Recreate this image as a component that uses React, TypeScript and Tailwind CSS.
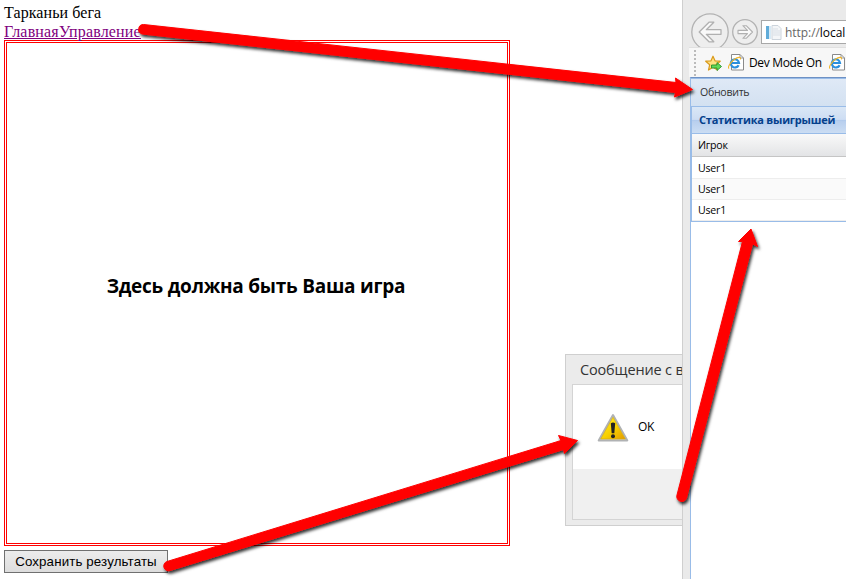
import React from "react";

function GamePane() {
  return (
    <main className="w-[682px] h-full shrink-0 bg-white pl-1 pt-[3px] overflow-hidden">
      <div className="font-['Liberation_Serif',serif] text-[16px] leading-[19px] text-black">
        <div className="h-[19px] tracking-[0.08px]">Тарканьи бега</div>
        <div className="h-[18px] leading-[19px] text-[#800080] underline whitespace-nowrap tracking-[0.17px]">
          <a>Главная</a><a>Управление</a>
        </div>
      </div>
      <section className="w-[506px] h-[506px] border-[3px] border-double border-[#ff0000] flex items-center justify-center pb-[14px]">
        <h1 className="font-['Open_Sans','Noto_Sans',sans-serif] font-bold text-[19px] leading-[26px] text-black whitespace-nowrap tracking-[-0.24px] -ml-[2px]">Здесь должна быть Ваша игра</h1>
      </section>
      <button className="mt-1 block w-[164px] h-[23px] border border-[#707070] bg-linear-to-b from-[#ececec] to-[#dddddd] font-['Liberation_Sans',sans-serif] text-[13.33px] leading-[20px] tracking-[0.12px] text-black whitespace-nowrap">Сохранить результаты</button>
    </main>
  );
}

function WarningIcon() {
  return (
    <svg width="32" height="30" viewBox="0 0 32 30">
      <defs>
        <linearGradient id="warn" x1="0" y1="0" x2="1" y2="1">
          <stop offset="0.2" stopColor="#ffe51a" />
          <stop offset="0.55" stopColor="#f7cf00" />
          <stop offset="1" stopColor="#e39a00" />
        </linearGradient>
      </defs>
      <path d="M16 2 30.3 27.4H1.7Z" fill="#d8dadb" stroke="#b0b2b4" strokeWidth="2" strokeLinejoin="round" />
      <path d="M16 4.2 28.3 26H3.7Z" fill="url(#warn)" stroke="#d6ae12" strokeWidth=".7" />
      <path d="M13.8 10.2q2.2-1.2 4.4 0l-.9 10h-2.6Z" fill="#222" />
      <circle cx="16" cy="23.3" r="2" fill="#222" />
    </svg>
  );
}

function MessageDialog() {
  return (
    <div className="absolute left-[565px] top-[354px] w-[160px] h-[172px] border border-[#cfcfcf] bg-[#ebebeb] pl-[6px]">
      <div className="h-[29px] pl-2 pt-[4px] font-['Open_Sans','Noto_Sans',sans-serif] text-[14.5px] leading-[21px] tracking-[-0.16px] text-[#333] whitespace-nowrap">Сообщение с веб-страницы</div>
      <div className="h-[136px] border border-[#d4d4d4] bg-[#f0f0f0]">
        <div className="h-[84px] bg-white flex items-center pl-[24px] gap-[9px] pt-[2px]">
          <WarningIcon />
          <span className="font-['Open_Sans','Noto_Sans',sans-serif] text-[12px] leading-4 text-black pb-[2px] tracking-[-0.4px]">OK</span>
        </div>
      </div>
    </div>
  );
}

function IeIcon() {
  return (
    <svg width="17" height="17" viewBox="0 0 17 17" className="shrink-0">
      <path d="M3.5.5h8.5l3.5 3.5v12h-12Z" fill="#fff" stroke="#8a8a8a" />
      <path d="M12 .5v3.5h3.5" fill="none" stroke="#999" />
      <path d="M10.6 11.2A4.1 4.1 0 1 1 11 9H3.6" fill="none" stroke="#2a8fdd" strokeWidth="2.2" />
      <path d="M1 14.6C-1 12.6 5 4.2 11 3.4c1.5-.2 1.8.8 1.1 2" fill="none" stroke="#f0b52b" strokeWidth="1.1" />
    </svg>
  );
}

function BackIcon() {
  return (
    <svg width="38" height="38" viewBox="0 0 38 38" className="shrink-0">
      <circle cx="19" cy="19" r="18.2" fill="#eeeeee" stroke="#b2b2b2" strokeWidth="1.3" />
      <path d="M8.2 19 18 9.2h4.8L15.3 16.7H30v4.6H15.3l7.5 7.5H18Z" fill="#f9f9f9" stroke="#b0b0b0" strokeWidth="1.3" strokeLinejoin="round" />
    </svg>
  );
}

function ForwardIcon() {
  return (
    <svg width="26" height="26" viewBox="0 0 26 26" className="shrink-0">
      <circle cx="13" cy="13" r="12.3" fill="#eeeeee" stroke="#b2b2b2" strokeWidth="1.3" />
      <path d="m20.5 13-6.3 6.3h-3.3l4.6-4.7H6v-3.2h9.5l-4.6-4.7h3.3Z" fill="#f9f9f9" stroke="#b0b0b0" strokeWidth="1.1" strokeLinejoin="round" />
    </svg>
  );
}

function FavoriteIcon() {
  return (
    <svg width="18" height="17" viewBox="0 0 18 17" className="shrink-0">
      <path d="m8 1.2 2 4.6 5.2.4-4 3.5 1.3 5.3L8 12.3 3.5 15l1.2-5.3-4-3.5L6 5.8Z" fill="#ffe182" stroke="#d99a1c" strokeWidth="1.2" strokeLinejoin="round" />
      <path d="M6.5 10H12V7.5l4.5 4-4.5 4V13H6.5Z" fill="#62d957" stroke="#29912d" strokeWidth=".9" />
    </svg>
  );
}

function BrowserPane() {
  return (
    <aside className="relative w-[164px] h-full border-l border-[#cfcfcf] bg-[#eaeaea] pl-[6px] overflow-hidden font-['Open_Sans','Noto_Sans',sans-serif]">
      <header className="h-[47px] pl-[2px] pt-[13px] flex items-start overflow-hidden">
        <BackIcon />
        <span className="mt-[6px] ml-[3px] flex shrink-0"><ForwardIcon /></span>
        <div className="ml-[3px] mt-[7px] w-[100px] h-[24px] shrink-0 border border-[#a8a8a8] bg-white flex items-center whitespace-nowrap text-[12px] leading-[17px] text-[#666]">
          <svg width="18" height="17" viewBox="0 0 18 17" className="ml-[3px] mr-[2px] shrink-0">
            <path d="M7 1.5h6l3 3v11H7Z" fill="#f4f6f8" stroke="#ccd4dc" />
            <path d="M8 5h5M8 7h7M8 9h7M8 11h7" stroke="#d9dfe6" />
            <path d="M1 2h5v13H1Z" fill="#d7eaf6" />
            <path d="M1 2h3v13H1Z" fill="#61acd9" />
          </svg>
          <span className="tracking-[-0.05px]">http://<span className="text-black">local</span></span>
        </div>
      </header>
      <div className="h-[30px] bg-[#f7f7f7] border-t border-[#e0e0e0] flex items-center pl-[5px] whitespace-nowrap text-[12px] leading-4 text-black">
        <span className="h-[26px] border-l-2 border-dotted border-[#bbb] mr-[9px]" />
        <span className="flex pt-[2px]"><FavoriteIcon /></span>
        <span className="ml-[5px] mr-[4px] flex"><IeIcon /></span>
        <span className="tracking-[-0.34px] w-[77px] shrink-0 pt-px">Dev Mode On</span>
        <span className="ml-[3px]"><IeIcon /></span>
      </div>
      <div className="h-[502px] border-t border-[#6e91c4] bg-white border-l-[1px] border-l-[#99bce8] ml-[1px] text-[10.6px] leading-[15px]">
        <div className="h-[28px] border-t border-[#99bce8] bg-linear-to-b from-[#dfe9f6] to-[#d3e1f1] pl-[9px] pt-[6px] text-[#333] tracking-[-0.3px]">Обновить</div>
        <section className="border-l border-b border-[#99bce8]">
          <h2 className="h-[28px] border-y border-[#99bce8] bg-[linear-gradient(#dae7f6_0%,#cdddf3_48%,#abc7ec_49%,#b8cfee_55%,#cbddf3_100%)] pl-[7px] pt-[5px] font-bold text-[#04408c] whitespace-nowrap text-[11px] tracking-[-0.22px]">Статистика выигрышей</h2>
          <div className="h-[23px] bg-linear-to-b from-[#f9f9f9] to-[#e3e4e6] border-b border-[#c5c5c5] pl-[6px] pt-[4px] text-black tracking-[-0.25px]">Игрок</div>
          <div className="h-[22px] border-b border-[#ededed] pl-[6px] pt-[4px] text-black tracking-[-0.2px]">User1</div>
          <div className="h-[21px] border-b border-[#ededed] bg-[#fafafa] pl-[6px] pt-[3px] text-black tracking-[-0.2px]">User1</div>
          <div className="h-[21px] border-b border-[#ededed] pl-[6px] pt-[3px] text-black tracking-[-0.2px]">User1</div>
        </section>
      </div>
    </aside>
  );
}

function Arrows() {
  return (
    <svg width="846" height="579" viewBox="0 0 846 579" className="absolute left-0 top-0 pointer-events-none">
      <defs>
        <filter id="shadow" x="-10%" y="-10%" width="120%" height="130%">
          <feDropShadow dx="1.5" dy="2.5" stdDeviation="1.5" floodColor="#000" floodOpacity=".8" />
        </filter>
      </defs>
      <g fill="#ff0000" stroke="#ff0000" strokeWidth="1" strokeLinejoin="round" filter="url(#shadow)">
        <path d="M143.5 24.5 676 82.5 675.5 78 692.5 89.5 674.5 97 675.5 92.5 142.5 34A4.8 4.8 0 0 1 143.5 24.5Z" />
        <path d="M167 561.5 561 440.5 558.5 435.5 577.5 440.5 564.5 453.5 563.5 449.5 170 570.5A4.7 4.7 0 0 1 167 561.5Z" />
        <path d="M677 495 742.5 241.5 738.5 241.5 751 229 757.5 246.5 752.5 244 686.5 498A4.9 4.9 0 0 1 677 495Z" />
      </g>
    </svg>
  );
}

export default function App() {
  return (
    <div className="relative flex w-[846px] h-[579px] overflow-hidden bg-white">
      <GamePane />
      <MessageDialog />
      <BrowserPane />
      <Arrows />
    </div>
  );
}
